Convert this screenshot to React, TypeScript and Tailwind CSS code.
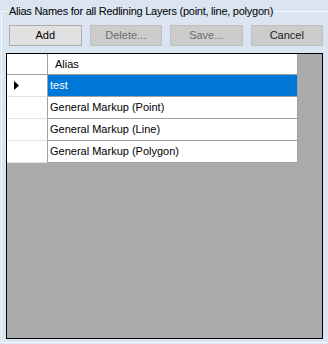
import React from "react";

const rows = ["test", "General Markup (Point)", "General Markup (Line)", "General Markup (Polygon)"];

export default function App() {
  return (
    <div
      className="w-[328px] h-[344px] bg-[#dbe5f1] pt-[4px] overflow-hidden text-[11px] leading-[15px] text-black"
      style={{ fontFamily: '"Liberation Sans", Arial, sans-serif' }}
    >
      <fieldset className="ml-[1px] h-[339px] border border-r-0 border-[#f4f7fb]">
        <legend className="ml-[6px] px-[1px] text-[11px] leading-[15px] tracking-[-0.25px]">
          Alias Names for all Redlining Layers (point, line, polygon)
        </legend>
        <div className="flex gap-[8px] pl-[7px] pr-[5px] pt-[6px]">
          <button className="flex-1 h-[21px] bg-[#e1e1e1] border border-[#adadad] text-black">Add</button>
          <button className="flex-1 h-[21px] bg-[#cccccc] border border-[#bfbfbf] text-[#6d6d6d]">Delete...</button>
          <button className="flex-1 h-[21px] bg-[#cccccc] border border-[#bfbfbf] text-[#6d6d6d]">Save...</button>
          <button className="flex-1 h-[21px] bg-[#cccccc] border border-[#bfbfbf] text-[#1a1a1a]">Cancel</button>
        </div>
        <div className="ml-[4px] mt-[7px] w-[317px] h-[286px] border border-black bg-[#ababab] flex flex-col">
          <div className="flex h-[21px]">
            <div className="w-[41px] bg-white border-r border-b border-[#a0a0a0]" />
            <div className="w-[250px] bg-white border-r border-b border-[#a0a0a0] pl-[7px] flex items-center">
              Alias
            </div>
          </div>
          {rows.map((r, i) => (
            <div key={r} className="flex h-[22px]">
              <div className="w-[41px] bg-white border-r border-r-[#a0a0a0] border-b border-b-[#e3e3e3] flex items-center pl-[7px]">
                {i === 0 && (
                  <svg width="5" height="9" viewBox="0 0 5 9">
                    <path d="M0 0 L5 4.5 L0 9 Z" fill="#000" />
                  </svg>
                )}
              </div>
              <div
                className={
                  "w-[250px] border-r border-b border-[#a0a0a0] pl-[2px] flex items-center " +
                  (i === 0 ? "bg-[#0078d7] text-white" : "bg-white text-black")
                }
              >
                {r}
              </div>
            </div>
          ))}
        </div>
      </fieldset>
    </div>
  );
}
